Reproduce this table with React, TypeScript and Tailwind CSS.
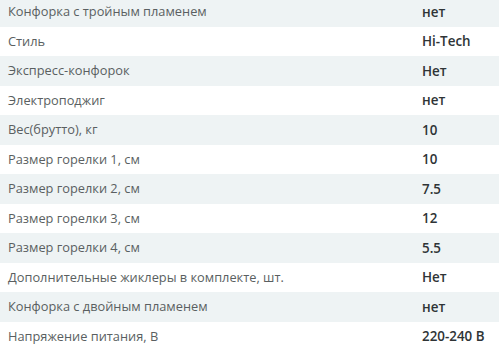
import React from 'react';

interface Spec {
  label: string;
  value: string;
}

const specs: Spec[] = [
  { label: 'Конфорка с тройным пламенем', value: 'нет' },
  { label: 'Стиль', value: 'Hi-Tech' },
  { label: 'Экспресс-конфорок', value: 'Нет' },
  { label: 'Электроподжиг', value: 'нет' },
  { label: 'Вес(брутто), кг', value: '10' },
  { label: 'Размер горелки 1, см', value: '10' },
  { label: 'Размер горелки 2, см', value: '7.5' },
  { label: 'Размер горелки 3, см', value: '12' },
  { label: 'Размер горелки 4, см', value: '5.5' },
  { label: 'Дополнительные жиклеры в комплекте, шт.', value: 'Нет' },
  { label: 'Конфорка с двойным пламенем', value: 'нет' },
  { label: 'Напряжение питания, В', value: '220-240 В' },
];

const App: React.FC = () => {
  return (
    <div className="w-[499px] h-[356px] overflow-hidden bg-white font-['Open_Sans',sans-serif]">
      <div className="-mt-[3px]">
        {specs.map((spec, i) => (
          <div
            key={spec.label}
            className={`flex items-center h-[29.5px] ${i % 2 === 0 ? 'bg-[#eef3f4]' : 'bg-white'}`}
          >
            <div className="w-[422px] pl-2 text-[12.8px] text-[#5a5f61]">{spec.label}</div>
            <div className="flex-1 text-[13.4px] font-semibold text-[#2f3436]">{spec.value}</div>
          </div>
        ))}
      </div>
    </div>
  );
};

export default App;
